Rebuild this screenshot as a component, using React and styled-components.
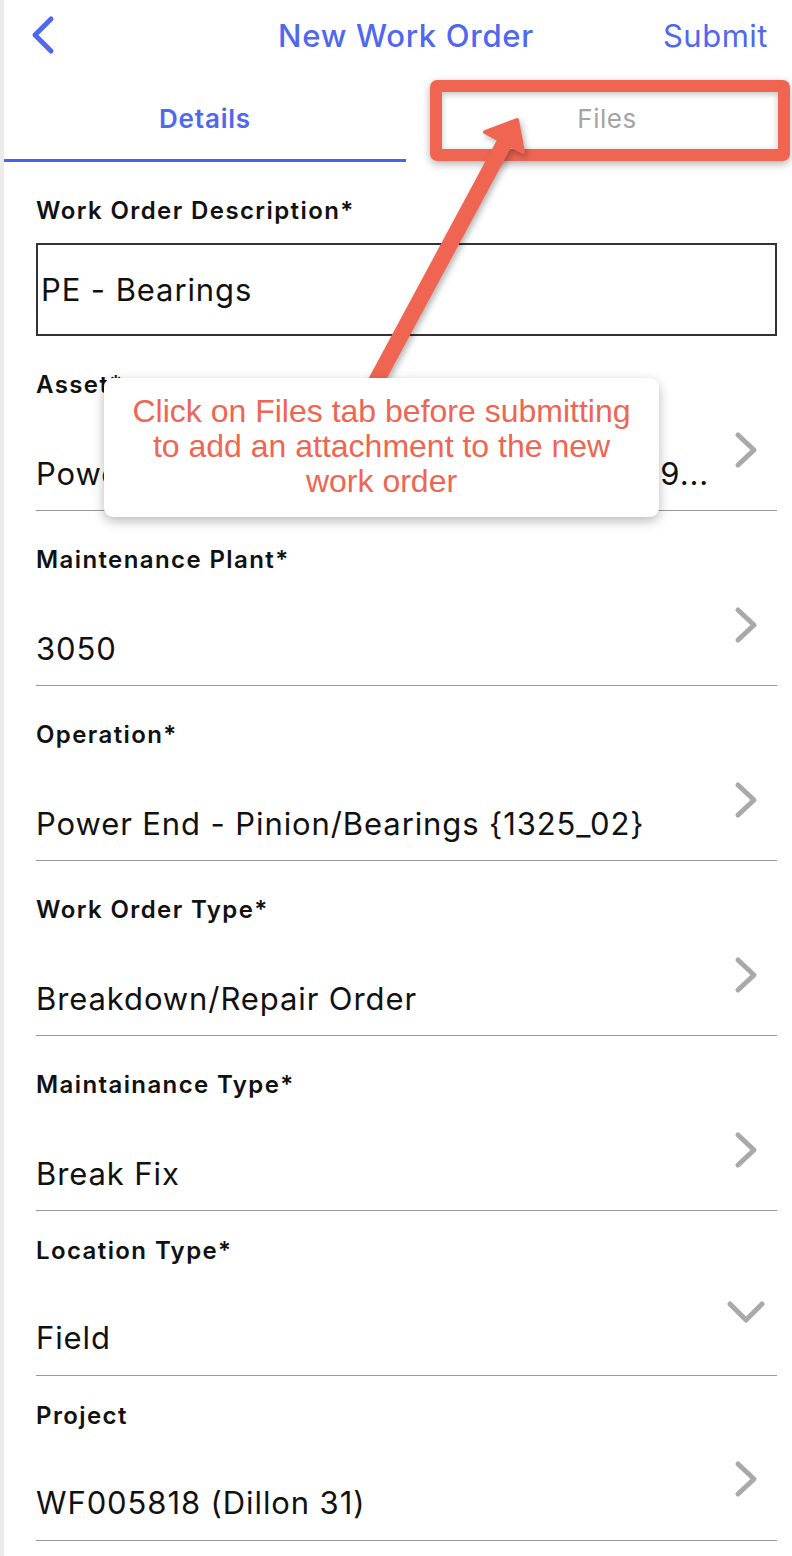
import styled, { createGlobalStyle } from 'styled-components';

const GlobalStyle = createGlobalStyle`
  body {
    margin: 0;
    background: #fff;
    font-family: Inter, "Noto Sans", sans-serif;
    color: #111;
  }
`;

const BLUE = '#5067ee';
const RED = '#ef6552';

const Wrapper = styled.div`
  position: relative;
  width: 792px;
  min-height: 1556px;
  overflow: hidden;
`;

const Screen = styled.div`
  border-left: 4px solid #ebebeb;
  min-height: 1556px;
  box-sizing: border-box;
`;

const Header = styled.header`
  display: grid;
  grid-template-columns: 1fr auto 1fr;
  align-items: center;
  height: 70px;
  padding: 0 24px 0 26px;
`;

const Title = styled.h1`
  margin: 0 0 0 14px;
  font-size: 31px;
  font-weight: 500;
  letter-spacing: 0.7px;
  color: ${BLUE};
`;

const Submit = styled.span`
  justify-self: end;
  font-size: 31px;
  letter-spacing: 0.5px;
  color: ${BLUE};
`;

const Tabs = styled.nav`
  display: grid;
  grid-template-columns: 402px 1fr;
`;

const Tab = styled.div`
  text-align: center;
  padding: 34px 0 25px ${p => (p.$active ? 0 : 16)}px;
  line-height: 30px;
  font-size: 26px;
  letter-spacing: ${p => (p.$active ? 0.8 : 0.5)}px;
  font-weight: ${p => (p.$active ? 600 : 400)};
  color: ${p => (p.$active ? BLUE : '#a4a4a4')};
  border-bottom: 3px solid ${p => (p.$active ? '#4a62ec' : 'transparent')};
`;

const Form = styled.div`
  padding: 0 15px 0 32px;
`;

const Section = styled.div`
  padding-top: ${p => (p.$compact ? 25 : 34)}px;
  border-bottom: ${p => (p.$plain ? 'none' : '1px solid #999')};
`;

const Label = styled.div`
  font-size: 24px;
  font-weight: 600;
  line-height: 30px;
  letter-spacing: 1.4px;
`;

const TextBox = styled.div`
  margin-top: 17px;
  height: 93px;
  box-sizing: border-box;
  border: 2px solid #333;
  display: flex;
  align-items: center;
  padding-left: 3px;
  font-size: 31px;
  letter-spacing: 0.9px;
`;

const ValueRow = styled.div`
  display: flex;
  justify-content: space-between;
  align-items: flex-start;
  gap: 12px;
  padding-top: ${p => (p.$compact ? 29 : 31)}px;
  padding-bottom: ${p => (p.$compact ? 17 : 16)}px;
`;

const Value = styled.div`
  min-width: 0;
  margin-top: 23px;
  font-size: 31px;
  letter-spacing: 0.9px;
  line-height: 40px;
  white-space: nowrap;
  overflow: hidden;
`;

const Chevron = styled.svg`
  flex: none;
  margin-right: ${p => p.$mr || 19}px;
  margin-top: ${p => p.$mt || 0}px;
`;

const RedBox = styled.div`
  position: absolute;
  left: 430px;
  top: 80px;
  width: 360px;
  height: 81px;
  box-sizing: border-box;
  border: 12px solid ${RED};
  border-radius: 7px;
  box-shadow: 0 3px 8px rgba(0, 0, 0, 0.3), inset 0 2px 6px rgba(0, 0, 0, 0.25);
`;

const ArrowLayer = styled.svg`
  position: absolute;
  left: 0;
  top: 0;
  filter: drop-shadow(2px 3px 3px rgba(0, 0, 0, 0.3));
`;

const Callout = styled.div`
  position: absolute;
  left: 104px;
  top: 378px;
  width: 555px;
  height: 139px;
  box-sizing: border-box;
  padding-top: 16px;
  background: #fff;
  border-radius: 9px;
  box-shadow: 0 4px 12px rgba(0, 0, 0, 0.28);
  text-align: center;
  font-family: "Liberation Sans", Arial, sans-serif;
  font-size: 32px;
  line-height: 35px;
  color: ${RED};
`;

const Right = () => (
  <Chevron width="24" height="38" viewBox="0 0 24 38">
    <path d="M4 4 L20 19 L4 34" fill="none" stroke="#a9a9a9" strokeWidth="5" strokeLinecap="round" strokeLinejoin="round" />
  </Chevron>
);

const Down = () => (
  <Chevron width="38" height="26" viewBox="0 0 38 26" $mr={12} $mt={5}>
    <path d="M3 4 L19 20 L35 4" fill="none" stroke="#a9a9a9" strokeWidth="5" strokeLinecap="round" strokeLinejoin="round" />
  </Chevron>
);

const fields = [
  { label: 'Asset*', value: 'Power End Assembly - Triplex {PE100049...' },
  { label: 'Maintenance Plant*', value: '3050' },
  { label: 'Operation*', value: 'Power End - Pinion/Bearings {1325_02}' },
  { label: 'Work Order Type*', value: 'Breakdown/Repair Order' },
  { label: 'Maintainance Type*', value: 'Break Fix' },
  { label: 'Location Type*', value: 'Field', compact: true, dropdown: true },
  { label: 'Project', value: 'WF005818 (Dillon 31)', compact: true },
];

export default function App() {
  return (
    <Wrapper>
      <GlobalStyle />
      <Screen>
        <Header>
          <svg width="26" height="40" viewBox="0 0 26 40">
            <path d="M21 4 L5 20 L21 36" fill="none" stroke={BLUE} strokeWidth="5" strokeLinecap="round" strokeLinejoin="round" />
          </svg>
          <Title>New Work Order</Title>
          <Submit>Submit</Submit>
        </Header>
        <Tabs>
          <Tab $active>Details</Tab>
          <Tab>Files</Tab>
        </Tabs>
        <Form>
          <Section $plain>
            <Label>Work Order Description*</Label>
            <TextBox>PE - Bearings</TextBox>
          </Section>
          {fields.map(f => (
            <Section key={f.label} $compact={f.compact}>
              <Label>{f.label}</Label>
              <ValueRow $compact={f.compact}>
                <Value>{f.value}</Value>
                {f.dropdown ? <Down /> : <Right />}
              </ValueRow>
            </Section>
          ))}
        </Form>
      </Screen>

      <RedBox />
      <ArrowLayer width="792" height="560" viewBox="0 0 792 560">
        <line x1="366" y1="400" x2="506" y2="140" stroke={RED} strokeWidth="16" />
        <polygon points="517,120 485,132 523,152" fill={RED} stroke={RED} strokeWidth="4" strokeLinejoin="round" />
      </ArrowLayer>
      <Callout>
        Click on Files tab before submitting
        <br />
        to add an attachment to the new
        <br />
        work order
      </Callout>
    </Wrapper>
  );
}
